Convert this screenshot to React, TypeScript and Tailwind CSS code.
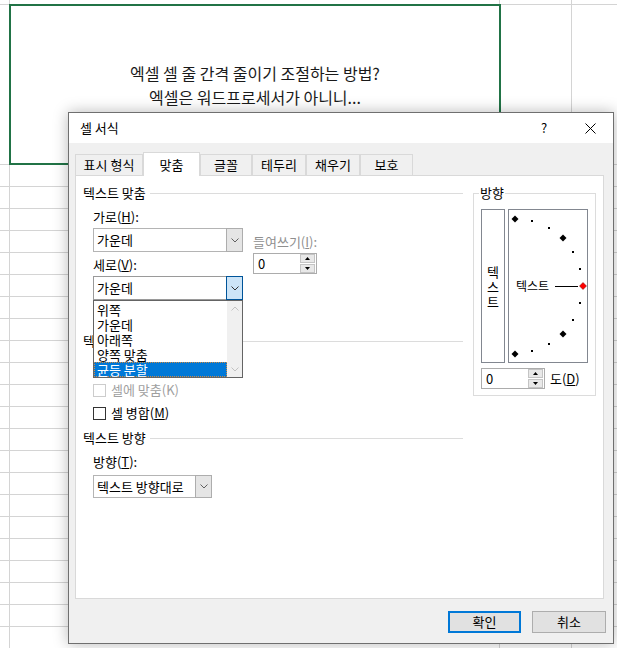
import type { ReactNode } from 'react';

const GRID_ROWS = 22;
const TABS = [
  { label: '표시 형식', width: 'w-[68px]' },
  { label: '맞춤', width: 'w-[57px]', active: true },
  { label: '글꼴', width: 'w-[52px]' },
  { label: '테두리', width: 'w-[54px]' },
  { label: '채우기', width: 'w-[54px]' },
  { label: '보호', width: 'w-[53px]' },
];
const LIST_ITEMS = ['위쪽', '가운데', '아래쪽', '양쪽 맞춤', '균등 분할'];
const DIAL_ANGLES = [90, 75, 60, 45, 30, 15, 0, -15, -30, -45, -60, -75, -90];

function Chevron({ up = false, className = '' }: { up?: boolean; className?: string }) {
  return (
    <svg width="8" height="5" viewBox="0 0 8 5" className={className}>
      <path
        d={up ? 'M0.5 4.5 L4 1 L7.5 4.5' : 'M0.5 0.5 L4 4 L7.5 0.5'}
        fill="none"
        stroke="currentColor"
        strokeWidth="1"
      />
    </svg>
  );
}

function Combo({ value, width, open = false }: { value: string; width: string; open?: boolean }) {
  return (
    <div className={`flex h-full ${width} items-stretch border bg-white ${open ? 'border-[#9a9a9a]' : 'border-[#b4b4b4]'}`}>
      <span className="flex flex-1 items-center pl-[3px]">{value}</span>
      <span
        className={`-my-px -mr-px flex w-[17px] items-center justify-center border ${
          open ? 'border-[#005499] bg-[#cce4f7] text-[#333]' : 'border-[#adadad] bg-[#e5e5e5] text-[#606060]'
        }`}
      >
        <Chevron />
      </span>
    </div>
  );
}

function Spinner() {
  return (
    <div className="flex h-[21px] w-[64px] items-center border border-[#acacac] bg-white pl-[4px] pr-px">
      <span className="flex-1">0</span>
      <div className="flex flex-col gap-px">
        <span className="flex h-[9px] w-[15px] items-center justify-center border border-[#c4c4c4] bg-[#e8e8e8]">
          <svg width="5" height="3" viewBox="0 0 5 3">
            <path d="M0 3 L2.5 0 L5 3 Z" fill="#000" />
          </svg>
        </span>
        <span className="flex h-[9px] w-[15px] items-center justify-center border border-[#c4c4c4] bg-[#e8e8e8]">
          <svg width="5" height="3" viewBox="0 0 5 3">
            <path d="M0 0 L5 0 L2.5 3 Z" fill="#000" />
          </svg>
        </span>
      </div>
    </div>
  );
}

function Checkbox({ label, disabled = false }: { label: ReactNode; disabled?: boolean }) {
  return (
    <div className="flex h-[16px] items-center gap-[5px] pl-[10px]">
      <span className={`h-[13px] w-[13px] border bg-white ${disabled ? 'border-[#cccccc]' : 'border-[#333333]'}`} />
      <span className={disabled ? 'text-[#a0a0a0]' : ''}>{label}</span>
    </div>
  );
}

function GroupHeader({ title, className = '' }: { title: string; className?: string }) {
  return (
    <div className={`flex h-[16px] items-center ${className}`}>
      <span>{title}</span>
      <span className="ml-[4px] h-px flex-1 bg-[#dcdcdc]" />
    </div>
  );
}

function DropList() {
  return (
    <div className="absolute left-0 top-full z-10 flex h-[78px] w-[150px] border border-[#646464] bg-white leading-[15px]">
      <div className="flex flex-1 flex-col pt-px">
        {LIST_ITEMS.map((item, i) =>
          i === LIST_ITEMS.length - 1 ? (
            <div
              key={item}
              className="flex h-[15px] items-center border border-dotted border-[#d08a43] bg-[#0078d7] pl-[2px] leading-[13px] text-white"
            >
              {item}
            </div>
          ) : (
            <div key={item} className="flex h-[15px] items-center pl-[3px]">
              {item}
            </div>
          ),
        )}
      </div>
      <div className="flex w-[15px] flex-col items-center justify-between bg-[#f0f0f0] py-[5px] text-[#c2c2c2]">
        <Chevron up />
        <Chevron />
      </div>
    </div>
  );
}

function Dial() {
  const cx = 6;
  const cy = 76;
  const r = 67.5;
  return (
    <div className="relative h-[154px] w-[80px] border border-[#828790] bg-white">
      <svg width="78" height="152" viewBox="0 0 78 152" className="block">
        {DIAL_ANGLES.map((a) => {
          const rad = (a * Math.PI) / 180;
          const x = Math.round(cx + r * Math.cos(rad));
          const y = Math.round(cy - r * Math.sin(rad));
          if (a === 0) {
            return (
              <polygon
                key={a}
                points={`${x},${y - 3.5} ${x + 3.5},${y} ${x},${y + 3.5} ${x - 3.5},${y}`}
                fill="#ff0000"
                stroke="#7a0000"
                strokeWidth="0.5"
              />
            );
          }
          if (a % 45 === 0) {
            return (
              <polygon
                key={a}
                points={`${x},${y - 3.5} ${x + 3.5},${y} ${x},${y + 3.5} ${x - 3.5},${y}`}
                fill="#000"
              />
            );
          }
          return <rect key={a} x={x - 1} y={y - 1} width="2" height="2" fill="#000" />;
        })}
        <line x1="46" y1="76.5" x2="69" y2="76.5" stroke="#000" strokeWidth="1" />
      </svg>
      <span className="absolute left-[7px] top-[68px] text-[12px] leading-[16px]">텍스트</span>
    </div>
  );
}

function Spreadsheet() {
  const cells = (
    <>
      <div className="h-full w-[10px] border-r border-[#d4d4d4]" />
      <div className="h-full w-[490px] border-r border-[#d4d4d4]" />
      <div className="h-full w-[72px] border-r border-[#d4d4d4]" />
      <div className="h-full flex-1" />
    </>
  );
  return (
    <div className="flex flex-col">
      <div className="flex h-[5px] border-b border-[#d4d4d4]">{cells}</div>
      <div className="flex h-[160px] border-b border-[#d4d4d4]">
        <div className="h-full w-[10px] border-r border-[#d4d4d4]" />
        <div className="relative flex h-full w-[490px] flex-col items-center justify-center text-[16px] leading-[24px] text-[#1a1a1a]">
          <div className="absolute inset-[-1px] border-2 border-[#217346]" />
          <p>엑셀 셀 줄 간격 줄이기 조절하는 방법?</p>
          <p>엑셀은 워드프로세서가 아니니...</p>
        </div>
        <div className="h-full w-[72px] border-r border-[#d4d4d4]" />
        <div className="h-full flex-1" />
      </div>
      {Array.from({ length: GRID_ROWS }).map((_, i) => (
        <div key={i} className="flex h-[22px] border-b border-[#d4d4d4]">
          {cells}
        </div>
      ))}
    </div>
  );
}

function AlignmentTab() {
  return (
    <div className="flex h-[424px] border border-[#d9d9d9] bg-white pl-[7px] pt-[9px]">
      <div className="flex w-[380px] flex-col">
        <GroupHeader title="텍스트 맞춤" />
        <div className="mt-[8px] flex gap-[10px] pl-[10px]">
          <div className="flex w-[150px] flex-col">
            <span className="h-[16px]">
              가로(<u>H</u>):
            </span>
            <div className="mt-[3px] h-[24px]">
              <Combo value="가운데" width="w-[150px]" />
            </div>
            <span className="mt-[5px] h-[16px]">
              세로(<u>V</u>):
            </span>
            <div className="relative mt-[3px] h-[24px]">
              <Combo value="가운데" width="w-[150px]" open />
              <DropList />
            </div>
          </div>
          <div className="mt-[25px] flex flex-col">
            <span className="h-[16px] text-[#8f8f8f]">
              들여쓰기(<u>I</u>):
            </span>
            <div className="mt-[3px]">
              <Spinner />
            </div>
          </div>
        </div>
        <GroupHeader title="텍스트 조정" className="mt-[33px]" />
        {/* first checkbox row sits under the open list */}
        <div className="mt-[10px] h-[16px]" />
        <div className="mt-[7px]">
          <Checkbox label="셀에 맞춤(K)" disabled />
        </div>
        <div className="mt-[7px]">
          <Checkbox label={<>셀 병합(<u>M</u>)</>} />
        </div>
        <GroupHeader title="텍스트 방향" className="mt-[9px]" />
        <span className="mt-[8px] h-[16px] pl-[10px]">
          방향(<u>T</u>):
        </span>
        <div className="mt-[5px] h-[23px] pl-[10px]">
          <Combo value="텍스트 방향대로" width="w-[119px]" />
        </div>
      </div>

      <div className="relative ml-[10px] mt-[8px] h-[203px] w-[123px] border border-[#dcdcdc] pl-[7px] pt-[15px]">
        <span className="absolute -top-[9px] left-[5px] bg-white px-px leading-[16px]">방향</span>
        <div className="flex gap-[3px]">
          <div className="flex h-[154px] w-[24px] flex-col items-center justify-center border border-[#828790] leading-[15px]">
            <span>텍</span>
            <span>스</span>
            <span>트</span>
          </div>
          <Dial />
        </div>
        <div className="mt-[5px] flex items-center gap-[5px]">
          <Spinner />
          <span>
            도(<u>D</u>)
          </span>
        </div>
      </div>
    </div>
  );
}

export default function App() {
  return (
    <div className="relative h-[648px] w-[617px] overflow-hidden bg-white font-['Noto_Sans_CJK_KR','Noto_Sans',sans-serif] text-[13px] leading-[16px] text-black">
      <Spreadsheet />

      <div className="absolute left-[68px] top-[112px] flex h-[532px] w-[546px] flex-col border border-[#6f6f6f] bg-[#f0f0f0] shadow-[0_0_14px_rgba(0,0,0,0.28)]">
        <div className="flex h-[30px] items-center bg-white">
          <span className="flex-1 pl-[11px]">셀 서식</span>
          <span className="flex h-full w-[46px] items-center justify-center text-[13px]">?</span>
          <span className="flex h-full w-[46px] items-center justify-center">
            <svg width="11" height="11" viewBox="0 0 11 11">
              <path d="M0.5 0.5 L10.5 10.5 M10.5 0.5 L0.5 10.5" stroke="#000" strokeWidth="1" />
            </svg>
          </span>
        </div>

        <div className="flex flex-1 flex-col">
          <div className="pl-[6px] pr-[9px] pt-[9px]">
            <div className="flex h-[23px] items-end">
              {TABS.map((tab) => (
                <div
                  key={tab.label}
                  className={`flex ${tab.width} items-center justify-center border border-b-0 border-[#d9d9d9] ${
                    tab.active ? 'relative z-10 -mb-px h-[24px] bg-white' : 'h-[21px] bg-[#f0f0f0]'
                  }`}
                >
                  {tab.label}
                </div>
              ))}
            </div>
            <AlignmentTab />
          </div>

          <div className="mt-[12px] flex justify-end gap-[11px] pr-[7px]">
            <button className="h-[22px] w-[73px] border-2 border-[#0078d7] bg-[#e1e1e1]">확인</button>
            <button className="h-[22px] w-[74px] border border-[#adadad] bg-[#e1e1e1]">취소</button>
          </div>
        </div>
      </div>
    </div>
  );
}
